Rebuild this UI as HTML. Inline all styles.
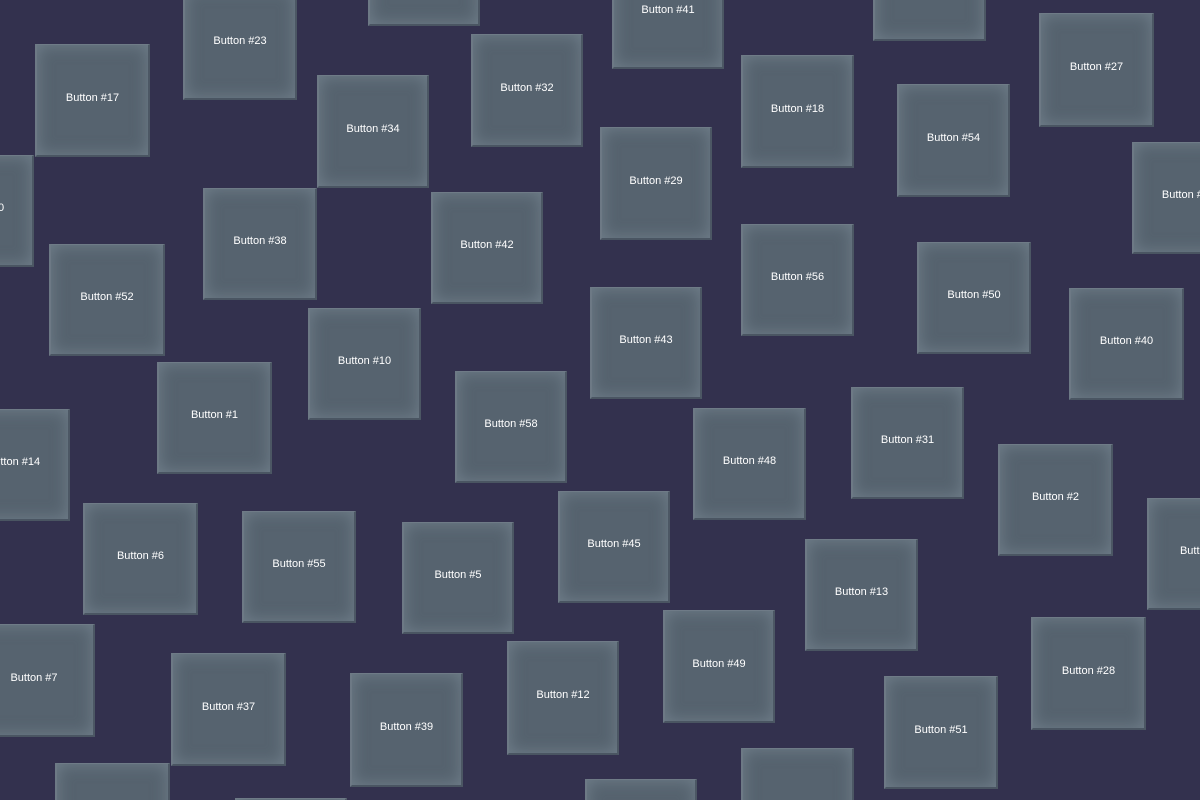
<!DOCTYPE html>
<html><head><meta charset="utf-8"><style>
html,body{margin:0;padding:0;width:1200px;height:800px;overflow:hidden;}
body{background:#33314e;position:relative;font-family:"Liberation Sans",sans-serif;}
#w{position:absolute;left:0;top:0;width:1200px;height:800px;overflow:hidden;}
.b{position:absolute;width:112px;height:112px;background:#56636f;box-sizing:border-box;
border-top:1px solid #6f7b87;border-left:2px solid #6d7985;border-right:2px solid #4c5764;border-bottom:2px solid #4a5562;
box-shadow:inset 0 0 16px rgba(140,155,168,0.5);padding-bottom:5px;
color:#fff;font-size:11px;display:flex;align-items:center;justify-content:center;white-space:nowrap;}
</style></head><body><div id="w">
<div class="b" style="left:183px;top:-12px;height:112px;width:114px">Button #23</div>
<div class="b" style="left:35px;top:44px;width:115px;height:113px">Button #17</div>
<div class="b" style="left:368px;top:-86px">Button #60</div>
<div class="b" style="left:612px;top:-43px">Button #41</div>
<div class="b" style="left:873px;top:-71px;width:113px">Button #9</div>
<div class="b" style="left:1039px;top:13px;width:115px;height:114px">Button #27</div>
<div class="b" style="left:471px;top:34px;height:113px">Button #32</div>
<div class="b" style="left:317px;top:75px;height:113px">Button #34</div>
<div class="b" style="left:741px;top:55px;width:113px;height:113px">Button #18</div>
<div class="b" style="left:897px;top:84px;width:113px;height:113px">Button #54</div>
<div class="b" style="left:-79px;top:155px;width:113px">Button #20</div>
<div class="b" style="left:600px;top:127px;height:113px">Button #29</div>
<div class="b" style="left:1132px;top:142px;width:113px">Button #33</div>
<div class="b" style="left:203px;top:188px;width:114px">Button #38</div>
<div class="b" style="left:431px;top:192px">Button #42</div>
<div class="b" style="left:741px;top:224px;width:113px">Button #56</div>
<div class="b" style="left:49px;top:244px;width:116px">Button #52</div>
<div class="b" style="left:917px;top:242px;width:114px">Button #50</div>
<div class="b" style="left:1069px;top:288px;width:115px">Button #40</div>
<div class="b" style="left:590px;top:287px">Button #43</div>
<div class="b" style="left:308px;top:308px;width:113px">Button #10</div>
<div class="b" style="left:157px;top:362px;width:115px">Button #1</div>
<div class="b" style="left:455px;top:371px">Button #58</div>
<div class="b" style="left:851px;top:387px;width:113px">Button #31</div>
<div class="b" style="left:693px;top:408px;width:113px">Button #48</div>
<div class="b" style="left:-43px;top:409px;width:113px">Button #14</div>
<div class="b" style="left:998px;top:444px;width:115px">Button #2</div>
<div class="b" style="left:83px;top:503px;width:115px">Button #6</div>
<div class="b" style="left:558px;top:491px">Button #45</div>
<div class="b" style="left:242px;top:511px;width:114px">Button #55</div>
<div class="b" style="left:402px;top:522px">Button #5</div>
<div class="b" style="left:1147px;top:498px;width:113px">Button #4</div>
<div class="b" style="left:805px;top:539px;width:113px">Button #13</div>
<div class="b" style="left:-27px;top:624px;width:122px;height:113px">Button #7</div>
<div class="b" style="left:663px;top:610px;height:113px">Button #49</div>
<div class="b" style="left:1031px;top:617px;width:115px;height:113px">Button #28</div>
<div class="b" style="left:507px;top:641px;height:114px">Button #12</div>
<div class="b" style="left:171px;top:653px;width:115px;height:113px">Button #37</div>
<div class="b" style="left:350px;top:673px;width:113px;height:114px">Button #39</div>
<div class="b" style="left:884px;top:676px;width:114px;height:113px">Button #51</div>
<div class="b" style="left:55px;top:763px;width:115px">Button #19</div>
<div class="b" style="left:741px;top:748px;width:113px;height:130px">Button #22</div>
<div class="b" style="left:585px;top:779px">Button #15</div>
<div class="b" style="left:235px;top:798px">Button #26</div>
</div></body></html>
